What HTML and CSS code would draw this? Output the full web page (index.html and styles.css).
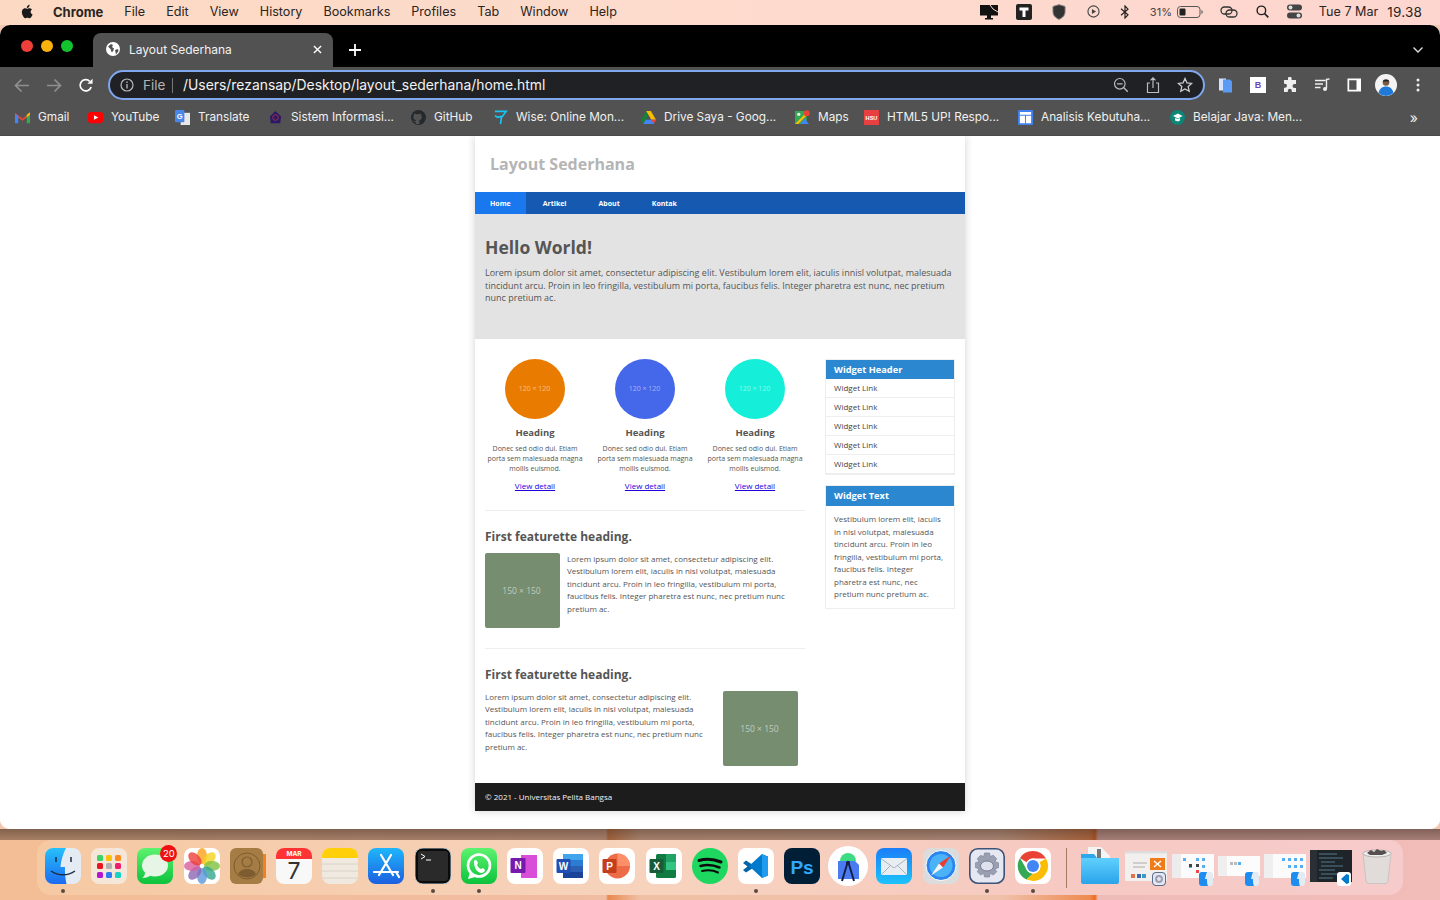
FILE: index.html
```html
<!DOCTYPE html>
<html lang="en">
<head>
<meta charset="utf-8">
<title>Layout Sederhana</title>
<link rel="stylesheet" href="styles.css">
</head>
<body>
<svg class="defs" aria-hidden="true">
  <defs>
    <linearGradient id="gBlue" x1="0" y1="0" x2="0" y2="1"><stop offset="0" stop-color="#1fb6fb"/><stop offset="1" stop-color="#1c5fe0"/></linearGradient>
    <linearGradient id="gMail" x1="0" y1="0" x2="0" y2="1"><stop offset="0" stop-color="#1a7df8"/><stop offset="1" stop-color="#1dc3fb"/></linearGradient>
    <linearGradient id="gGreen" x1="0" y1="0" x2="0" y2="1"><stop offset="0" stop-color="#5df36f"/><stop offset="1" stop-color="#0cc23c"/></linearGradient>
    <linearGradient id="gFolder" x1="0" y1="0" x2="0" y2="1"><stop offset="0" stop-color="#5fd0fd"/><stop offset="1" stop-color="#2aa3ea"/></linearGradient>
    <linearGradient id="gFinder" x1="0" y1="0" x2="0" y2="1"><stop offset="0" stop-color="#27c0fb"/><stop offset="1" stop-color="#1a6bf0"/></linearGradient>
  </defs>
</svg>

<header class="menubar">
  <div class="menu-left">
    <svg class="apple" viewBox="0 0 14 16"><path fill="#1a1a1a" d="M11.4 8.4c0-1.7 1.4-2.5 1.5-2.6-.8-1.200-2.100-1.300-2.500-1.400-1.100-.1-2.100.6-2.600.6-.6 0-1.400-.6-2.300-.6C4.300 4.400 3.200 5.100 2.600 6.200c-1.300 2.200-.3 5.400.9 7.200.6.900 1.300 1.800 2.200 1.800.9 0 1.200-.6 2.300-.6s1.400.6 2.300.6c1 0 1.600-.9 2.200-1.800.7-1 1-2 1-2.100-.1 0-2.100-.8-2.100-2.900zM9.600 3.100c.5-.6.800-1.400.7-2.300-.7 0-1.600.5-2.100 1.100-.5.500-.9 1.400-.8 2.200.8.100 1.700-.4 2.200-1z"/></svg>
    <b class="menu-app">Chrome</b>
    <span>File</span><span>Edit</span><span>View</span><span>History</span><span>Bookmarks</span><span>Profiles</span><span>Tab</span><span>Window</span><span>Help</span>
  </div>
  <div class="menu-right">
    <svg class="st st-monitor" viewBox="0 0 18 16"><path fill="#111" d="M0 1h18v10.500H0z"/><path fill="#111" d="M7 11h4v3h2v1.500H5V14h2z"/><path stroke="#fdd6cc" stroke-width="1" fill="none" d="M10 1l3 4 5 3"/></svg>
    <svg class="st st-t" viewBox="0 0 16 16"><rect width="16" height="16" rx="2" fill="#222"/><path fill="#fff" d="M3.500 3.500h9v3h-3v6.500h-3V6.500h-3z"/></svg>
    <svg class="st st-shield" viewBox="0 0 14 16"><path fill="#333" stroke="#777" d="M7 .7l6 1.800v5c0 4-2.800 6.500-6 7.800-3.200-1.300-6-3.800-6-7.800v-5z"/></svg>
    <svg class="st st-play" viewBox="0 0 14 14"><circle cx="7" cy="7" r="6" fill="none" stroke="#444" stroke-width="1.200"/><path fill="#444" d="M5.300 4.300l4.500 2.700-4.500 2.700z"/></svg>
    <svg class="st st-bt" viewBox="0 0 10 14"><path fill="none" stroke="#222" stroke-width="1.200" d="M1 3.800l7 6L5 13V1l3 3.200-7 6"/></svg>
    <span class="st-pct">31%</span>
    <svg class="st st-bat" viewBox="0 0 26 12"><rect x=".5" y=".5" width="22.500" height="11" rx="3" fill="none" stroke="#555"/><rect x="2.500" y="2.500" width="6" height="7" rx="1" fill="#222"/><path d="M24.500 4v4c.8-.3 1.200-1 1.200-2s-.4-1.700-1.200-2z" fill="#555"/></svg>
    <svg class="st st-link" viewBox="0 0 18 12"><g fill="none" stroke="#333" stroke-width="1.300"><rect x="1" y="1" width="11" height="7" rx="3.500"/><rect x="6" y="4" width="11" height="7" rx="3.500"/></g></svg>
    <svg class="st st-search" viewBox="0 0 14 14"><circle cx="5.800" cy="5.800" r="4.600" fill="none" stroke="#222" stroke-width="1.500"/><path d="M9.300 9.300l4 4" stroke="#222" stroke-width="1.700"/></svg>
    <svg class="st st-ctl" viewBox="0 0 15 15"><rect y=".5" width="15" height="6" rx="3" fill="#444"/><circle cx="3.500" cy="3.500" r="2" fill="#ddd"/><rect y="8.500" width="15" height="6" rx="3" fill="#444"/><circle cx="11.500" cy="11.500" r="2" fill="#ddd"/></svg>
    <span class="st-date">Tue 7 Mar</span><span class="st-time">19.38</span>
  </div>
</header>

<main class="window">
  <div class="tabstrip">
    <div class="lights"><i class="l-red"></i><i class="l-yellow"></i><i class="l-green"></i></div>
    <div class="tab">
      <svg class="tab-globe" viewBox="0 0 14 14"><circle cx="7" cy="7" r="7" fill="#fff"/><path fill="#525252" d="M2 4.500l3-2.500 2 1-1 2 2 1.500-1 3-1.500.5-1-3zM9 8l3-1 .5 2-2.500 3.500z"/></svg>
      <span class="tab-title">Layout Sederhana</span>
      <svg class="tab-x" viewBox="0 0 10 10"><path stroke="#fff" stroke-width="1.500" d="M1 1l8 8M9 1l-8 8"/></svg>
    </div>
    <svg class="newtab" viewBox="0 0 12 12"><path stroke="#fff" stroke-width="1.800" d="M6 0v12M0 6h12"/></svg>
    <svg class="tabmenu" viewBox="0 0 10 6"><path fill="none" stroke="#ddd" stroke-width="1.400" d="M.5.500L5 5 9.500.5"/></svg>
  </div>

  <div class="toolbar">
    <svg class="nav-ic" viewBox="0 0 16 14"><path fill="none" stroke="#8f8f8f" stroke-width="1.700" d="M15 7H2M7.500 1L1.500 7l6 6"/></svg>
    <svg class="nav-ic" viewBox="0 0 16 14"><path fill="none" stroke="#8f8f8f" stroke-width="1.700" d="M1 7h13M8.500 1l6 6-6 6"/></svg>
    <svg class="nav-ic" viewBox="0 0 16 16"><path fill="none" stroke="#fff" stroke-width="1.800" d="M13.500 9.500A6 6 0 1 1 12 3.500"/><path fill="#fff" d="M9.500 6.200h5.500V.7z"/></svg>
    <div class="omnibox">
      <svg class="omni-info" viewBox="0 0 14 14"><circle cx="7" cy="7" r="6" fill="none" stroke="#bbb" stroke-width="1.200"/><path stroke="#bbb" stroke-width="1.300" d="M7 6v4.500M7 3.500V5"/></svg>
      <span class="omni-file">File</span>
      <i class="omni-sep"></i>
      <span class="omni-url">/Users/rezansap/Desktop/layout_sederhana/home.html</span>
      <div class="omni-actions">
        <svg viewBox="0 0 16 16"><circle cx="6.800" cy="6.800" r="5.300" fill="none" stroke="#bbb" stroke-width="1.200"/><path stroke="#bbb" stroke-width="1.300" d="M4 6.800h5.600M10.800 10.800l4 4"/></svg>
        <svg viewBox="0 0 16 16"><path fill="none" stroke="#bbb" stroke-width="1.200" d="M5 6H2.500v9.500h11V6H11M8 11V1M5.500 3.300L8 .8l2.500 2.500"/></svg>
        <svg viewBox="0 0 16 16"><path fill="none" stroke="#ccc" stroke-width="1.300" d="M8 1.500l2 4.400 4.700.5-3.500 3.200 1 4.700L8 11.900l-4.200 2.400 1-4.700L1.300 6.400 6 5.900z"/></svg>
      </div>
    </div>
    <div class="tool-ext">
      <svg viewBox="0 0 16 16"><path fill="#d6e4fb" d="M1 1.500h7v12H1z"/><path fill="#5b9bf5" d="M5 2.500h7l2 2v11H5z"/></svg>
      <svg viewBox="0 0 16 16"><rect width="16" height="16" fill="#fff"/><text x="8" y="11.300" text-anchor="middle" class="ext-b">B</text></svg>
      <svg viewBox="0 0 16 16"><path fill="#eee" d="M6 1.500a1.800 1.800 0 0 1 3.600 0V3H14v4h-1.500a2 2 0 0 0 0 4H14v4H9.800v-1.200a2 2 0 0 0-4 0V15H2v-4.200h1a2 2 0 0 0 0-4H2V3h4z"/></svg>
      <svg viewBox="0 0 16 16"><path stroke="#eee" stroke-width="1.400" fill="none" d="M1 3.500h10.500M1 7h8M1 10.500h5.500M12.500 11.500V2.300L15.500 2"/><circle cx="11" cy="12" r="2" fill="#eee"/></svg>
      <svg viewBox="0 0 16 16"><path fill="#fff" d="M1.500 1.500h13.500v13H1.500z"/><path fill="#525252" d="M3.200 3.200h7.300v9.600H3.200z"/></svg>
      <svg class="ext-avatar" viewBox="0 0 22 22"><circle cx="11" cy="11" r="11" fill="#f4f4f4"/><path fill="#1f79d8" d="M3.500 19c1-4.500 4-6.500 7.500-6.500s6.500 2 7.500 6.500a11 11 0 0 1-15 0z"/><circle cx="11" cy="8.500" r="3.300" fill="#7a5a46"/><path fill="#222" d="M7.700 7.500c0-2.500 6.600-2.500 6.600 0z"/></svg>
      <svg class="ext-dots" viewBox="0 0 4 14"><circle cx="2" cy="2" r="1.500" fill="#eee"/><circle cx="2" cy="7" r="1.500" fill="#eee"/><circle cx="2" cy="12" r="1.500" fill="#eee"/></svg>
    </div>
  </div>

  <nav class="bookmarks">
    <a><svg viewBox="0 0 16 14"><path fill="#ea4335" d="M0 2l8 6 8-6v2.500L8 10.500 0 4.500z"/><path fill="#4285f4" d="M0 3v10h3.500V5z"/><path fill="#34a853" d="M16 3v10h-3.500V5z"/><path fill="#fbbc04" d="M12.500 4L16 1.500V4l-3.500 2.600z"/></svg><span>Gmail</span></a>
    <a><svg viewBox="0 0 16 12"><rect width="16" height="12" rx="3" fill="#f00"/><path fill="#fff" d="M6.300 3.500L11 6l-4.700 2.500z"/></svg><span>YouTube</span></a>
    <a><svg viewBox="0 0 16 16"><rect x="6" y="3" width="10" height="13" fill="#e8e8e8"/><rect width="10" height="13" rx="1" fill="#4a86e8"/><text x="5" y="9.500" text-anchor="middle" class="ext-g">G</text></svg><span>Translate</span></a>
    <a><svg viewBox="0 0 14 16"><path fill="#2b1a6a" d="M7 1l3 3 3 3-1 7H2L1 7l3-3z"/><circle cx="7" cy="8" r="3" fill="none" stroke="#a33" stroke-width="1"/></svg><span>Sistem Informasi...</span></a>
    <a><svg viewBox="0 0 16 16"><circle cx="8" cy="8" r="8" fill="#24292e"/><path fill="#525252" d="M5 15V12.500c-1.500.3-2.500-.3-3-1.500 1 .3 1.500 1 3 .8.100-.5.300-.8.500-1-2-.3-3-1.300-3-3.300 0-.8.200-1.300.7-1.900-.2-.5-.2-1.100.1-1.800.8 0 1.400.3 2 .8a6.500 6.500 0 0 1 3.400 0c.6-.5 1.200-.8 2-.8.300.7.300 1.300.1 1.800.5.600.7 1.100.7 1.900 0 2-1 3-3 3.300.4.400.5.800.5 1.400V15z"/></svg><span>GitHub</span></a>
    <a><svg viewBox="0 0 14 16"><path fill="none" stroke="#18c4f5" stroke-width="1.800" d="M1 1.500h12L8 8l-1 7M1 6l3 1.800 4-1"/></svg><span>Wise: Online Mon...</span></a>
    <a><svg viewBox="0 0 16 14"><path fill="#188038" d="M5.500 0L0 9.500l2.500 4.500L8 4.500z"/><path fill="#fbbc04" d="M5.500 0h5L16 9.500h-5z"/><path fill="#4285f4" d="M2.500 14L5 9.500h11L13.500 14z"/><path fill="#ea4335" d="M13.500 14L16 9.500h-5z"/></svg><span>Drive Saya - Goog...</span></a>
    <a><svg viewBox="0 0 14 14"><path fill="#34a853" d="M0 1h11v12H0z"/><path fill="#fbbc04" d="M0 13l11-11v3L3 13z"/><path fill="#4285f4" d="M5 13l4-5 4 5z"/><circle cx="11" cy="3" r="2.800" fill="#ea4335"/><circle cx="3.500" cy="4" r="1.500" fill="#eee"/></svg><span>Maps</span></a>
    <a><svg viewBox="0 0 16 16"><rect width="16" height="16" fill="#e84040"/><text x="8" y="10.500" text-anchor="middle" class="ext-h">HSU</text></svg><span>HTML5 UP! Respo...</span></a>
    <a><svg viewBox="0 0 16 16"><rect width="16" height="16" rx="1" fill="#3f7ff0"/><path fill="#fff" d="M2 2h12v3H2zM2 6h5.500v8H2zM8.500 6H14v8H8.500z"/></svg><span>Analisis Kebutuha...</span></a>
    <a><svg viewBox="0 0 15 15"><circle cx="7.500" cy="7.500" r="7.500" fill="#0d8577"/><path fill="#fff" d="M3 6l5-2.500L12.500 6 8 8.500z"/><path fill="#fff" d="M5 8v2.500l3 1 2-1V8L8 9z"/></svg><span>Belajar Java: Men...</span></a>
    <em class="bm-more">»</em>
  </nav>

  <div class="viewport">
    <div class="page">
      <div class="site-head">Layout Sederhana</div>
      <div class="site-nav">
        <a class="active">Home</a><a>Artikel</a><a>About</a><a>Kontak</a>
      </div>
      <section class="hero">
        <h1>Hello World!</h1>
        <p>Lorem ipsum dolor sit amet, consectetur adipiscing elit. Vestibulum lorem elit, iaculis innisl volutpat, malesuada tincidunt arcu. Proin in leo fringilla, vestibulum mi porta, faucibus felis. Integer pharetra est nunc, nec pretium nunc pretium ac.</p>
      </section>
      <div class="site-main">
        <div class="col-main">
          <div class="trio">
            <article class="trio-item">
              <div class="circle c-orange">120 × 120</div>
              <h3>Heading</h3>
              <p>Donec sed odio dui. Etiam porta sem malesuada magna mollis euismod.</p>
              <a class="view">View detail</a>
            </article>
            <article class="trio-item">
              <div class="circle c-blue">120 × 120</div>
              <h3>Heading</h3>
              <p>Donec sed odio dui. Etiam porta sem malesuada magna mollis euismod.</p>
              <a class="view">View detail</a>
            </article>
            <article class="trio-item">
              <div class="circle c-teal">120 × 120</div>
              <h3>Heading</h3>
              <p>Donec sed odio dui. Etiam porta sem malesuada magna mollis euismod.</p>
              <a class="view">View detail</a>
            </article>
          </div>
          <section class="feature">
            <h2>First featurette heading.</h2>
            <div class="feature-body">
              <div class="thumb">150 × 150</div>
              <p>Lorem ipsum dolor sit amet, consectetur adipiscing elit. Vestibulum lorem elit, iaculis in nisl volutpat, malesuada tincidunt arcu. Proin in leo fringilla, vestibulum mi porta, faucibus felis. Integer pharetra est nunc, nec pretium nunc pretium ac.</p>
            </div>
          </section>
          <section class="feature feature-alt">
            <h2>First featurette heading.</h2>
            <div class="feature-body">
              <p>Lorem ipsum dolor sit amet, consectetur adipiscing elit. Vestibulum lorem elit, iaculis in nisl volutpat, malesuada tincidunt arcu. Proin in leo fringilla, vestibulum mi porta, faucibus felis. Integer pharetra est nunc, nec pretium nunc pretium ac.</p>
              <div class="thumb">150 × 150</div>
            </div>
          </section>
        </div>
        <aside class="col-side">
          <div class="widget">
            <h4>Widget Header</h4>
            <ul>
              <li>Widget Link</li><li>Widget Link</li><li>Widget Link</li><li>Widget Link</li><li>Widget Link</li>
            </ul>
          </div>
          <div class="widget widget-text">
            <h4>Widget Text</h4>
            <p>Vestibulum lorem elit, iaculis in nisl volutpat, malesuada tincidunt arcu. Proin in leo fringilla, vestibulum mi porta, faucibus felis. Integer pharetra est nunc, nec pretium nunc pretium ac.</p>
          </div>
        </aside>
      </div>
      <footer class="site-foot">© 2021 - Universitas Pelita Bangsa</footer>
    </div>
  </div>
</main>

<div class="dock-area">
  <div class="dock">
    <div class="di run"><svg viewBox="0 0 36 36"><rect width="36" height="36" rx="8" fill="#e4ebf3"/><path fill="url(#gFinder)" d="M8 0h13c-3 6-5 12-5.500 19H20c-.3 5 .2 11 1.500 17H8a8 8 0 0 1-8-8V8a8 8 0 0 1 8-8z"/><path stroke="#1c2b44" stroke-width="1.500" d="M11 9v5M26 9v5"/><path fill="none" stroke="#1c2b44" stroke-width="1.300" d="M6 23c7 5 17 5 24 0"/></svg></div>
    <div class="di"><svg viewBox="0 0 36 36"><rect width="36" height="36" rx="8" fill="#f4e7da"/><g><rect x="6" y="7" width="6" height="6" rx="1.500" fill="#3cd264"/><rect x="15" y="7" width="6" height="6" rx="1.500" fill="#ffc107"/><rect x="24" y="7" width="6" height="6" rx="1.500" fill="#ff8a1f"/><rect x="6" y="15" width="6" height="6" rx="1.500" fill="#e8141e"/><rect x="15" y="15" width="6" height="6" rx="1.500" fill="#b0b0b0"/><rect x="24" y="15" width="6" height="6" rx="1.500" fill="#ee1f6a"/><rect x="6" y="24" width="6" height="6" rx="1.500" fill="#b515d0"/><rect x="15" y="24" width="6" height="6" rx="1.500" fill="#2f7bf5"/><rect x="24" y="24" width="6" height="6" rx="1.500" fill="#18d3c3"/></g></svg></div>
    <div class="di"><svg viewBox="0 0 36 36"><rect width="36" height="36" rx="8" fill="url(#gGreen)"/><ellipse cx="18" cy="17.500" rx="13" ry="11" fill="#e7f5e6"/><path fill="#e7f5e6" d="M8 24c0 3-1 5-3 6 4 0 7-1 9-3z"/></svg><b class="badge">20</b></div>
    <div class="di"><svg viewBox="0 0 36 36"><rect width="36" height="36" rx="8" fill="#fff"/><g transform="translate(18 18)" fill-opacity=".8"><ellipse cy="-10" rx="5" ry="8" fill="#f9a11b"/><ellipse cy="-10" rx="5" ry="8" fill="#f4d21f" transform="rotate(45)"/><ellipse cy="-10" rx="5" ry="8" fill="#7fc241" transform="rotate(90)"/><ellipse cy="-10" rx="5" ry="8" fill="#35a58e" transform="rotate(135)"/><ellipse cy="-10" rx="5" ry="8" fill="#5b97da" transform="rotate(180)"/><ellipse cy="-10" rx="5" ry="8" fill="#8c67b5" transform="rotate(225)"/><ellipse cy="-10" rx="5" ry="8" fill="#d95b9c" transform="rotate(270)"/><ellipse cy="-10" rx="5" ry="8" fill="#ec3f3a" transform="rotate(315)"/></g></svg></div>
    <div class="di"><svg viewBox="0 0 36 36"><path fill="#f2821f" d="M30 6h6v24h-6z"/><rect x="0" width="33" height="36" rx="6" fill="#a57c43"/><circle cx="17" cy="18" r="13" fill="none" stroke="#7e5c30" stroke-width="1"/><circle cx="17" cy="14" r="5" fill="none" stroke="#7e5c30" stroke-width="1.200"/><path fill="#7e5c30" d="M8 26c2-4 6-5 9-5s7 1 9 5c-2.500 2.500-5.500 3.500-9 3.500S10.500 28.500 8 26z"/></svg></div>
    <div class="di"><svg viewBox="0 0 36 36"><rect width="36" height="36" rx="8" fill="#f8f8f8"/><path fill="#f33" d="M8 0h20a8 8 0 0 1 8 8v3H0V8a8 8 0 0 1 8-8z"/><text x="18" y="8.300" text-anchor="middle" class="cal-m">MAR</text><text x="18" y="31" text-anchor="middle" class="cal-d">7</text></svg></div>
    <div class="di"><svg viewBox="0 0 36 36"><rect width="36" height="36" rx="8" fill="#efe9df"/><path fill="#ffcf0a" d="M8 0h20a8 8 0 0 1 8 8v2H0V8a8 8 0 0 1 8-8z"/><path stroke="#d8d2c8" d="M0 16h36M0 23h36M0 30h36"/></svg></div>
    <div class="di"><svg viewBox="0 0 36 36"><rect width="36" height="36" rx="8" fill="url(#gBlue)"/><path fill="none" stroke="#fff" stroke-width="2.200" stroke-linecap="round" d="M13 7l12 20M23 7L11 27M6 24h24M28 24l3 5"/></svg></div>
    <div class="di run"><svg viewBox="0 0 36 36"><rect width="36" height="36" rx="8" fill="#0b0b0b" stroke="#a7bcc6"/><rect x="3" y="3" width="30" height="30" rx="3" fill="#2a2a2a"/><path fill="none" stroke="#fff" d="M6 6l4 2.500L6 11M11 12h5"/></svg></div>
    <div class="di run"><svg viewBox="0 0 36 36"><rect width="36" height="36" rx="8" fill="url(#gGreen)"/><circle cx="18" cy="17.500" r="11" fill="none" stroke="#fff" stroke-width="2.600"/><path fill="#fff" d="M7 31l2-7 5 5zM13 14c0-2 2-3 3-1l1 2-1 2c1 2 2 3 4 4l2-1 2 2c0 2-2 3-4 3-4-1-7-5-7-11z"/></svg></div>
    <div class="di"><svg viewBox="0 0 36 36"><rect width="36" height="36" rx="8" fill="#fff"/><rect x="14" y="7" width="16" height="23" fill="#d84ed8"/><rect x="3.500" y="10" width="15" height="15" rx="1" fill="#7719aa"/><text x="11" y="21" text-anchor="middle" class="off-l">N</text></svg></div>
    <div class="di"><svg viewBox="0 0 36 36"><rect width="36" height="36" rx="8" fill="#fff"/><rect x="10" y="6" width="20" height="24" rx="1.500" fill="#2b7cd3"/><rect x="10" y="6" width="20" height="6" fill="#41a5ee"/><rect x="10" y="18" width="20" height="6" fill="#2b5fb4"/><rect x="10" y="24" width="20" height="6" fill="#1a4499"/><rect x="3.500" y="11" width="14" height="14" rx="1" fill="#1f4eb4"/><text x="10.500" y="22" text-anchor="middle" class="off-l">W</text></svg></div>
    <div class="di"><svg viewBox="0 0 36 36"><rect width="36" height="36" rx="8" fill="#fff"/><circle cx="18.500" cy="18" r="12.500" fill="#ed6c47"/><path fill="#ff8f6b" d="M18.500 5.500A12.500 12.500 0 0 1 31 18H18.500z"/><rect x="3.500" y="11" width="14" height="14" rx="1" fill="#c43e1c"/><text x="10.500" y="22" text-anchor="middle" class="off-l">P</text></svg></div>
    <div class="di"><svg viewBox="0 0 36 36"><rect width="36" height="36" rx="8" fill="#fff"/><rect x="10" y="6" width="20" height="24" rx="1.500" fill="#107c41"/><path fill="#21a366" d="M20 6h10v8H20z"/><path fill="#33c481" d="M20 14h10v8H20z"/><rect x="3.500" y="11" width="14" height="14" rx="1" fill="#185c37"/><text x="10.500" y="22" text-anchor="middle" class="off-l">X</text></svg></div>
    <div class="di"><svg viewBox="0 0 36 36"><circle cx="18" cy="18" r="18" fill="#1ed760"/><g fill="none" stroke="#0b0b0b" stroke-linecap="round"><path stroke-width="3" d="M7 12.500c7-2 15-1.500 22 1.500"/><path stroke-width="2.500" d="M8.500 18c6-1.500 13-1 19 1.500"/><path stroke-width="2" d="M10 23c5-1 11-1 16 1.500"/></g></svg></div>
    <div class="di run"><svg viewBox="0 0 36 36"><rect width="36" height="36" rx="8" fill="#fff"/><path fill="#0065a9" d="M5 15l3-2.500 7 4.500v3l-7 4.500L5 22l4.500-3.500z"/><path fill="#007acc" d="M24 6l-13 12 13 12 6-2.500v-19zM24 12l-6 6 6 6z"/><path fill="#1f9cf0" d="M24 6l6 3v18.500L24 30z"/></svg></div>
    <div class="di"><svg viewBox="0 0 36 36"><rect width="36" height="36" rx="8" fill="#001e36"/><text x="18" y="25.500" text-anchor="middle" class="ps">Ps</text></svg></div>
    <div class="di di-wide"><svg viewBox="0 0 40 40"><circle cx="20" cy="20" r="20" fill="#fff"/><path fill="#3ddc84" d="M12 15a8 8 0 0 1 16 0z"/><path fill="#4a7bf0" d="M10 15h17l4 4v14H10z"/><path fill="none" stroke="#15204a" stroke-width="2" d="M20 15l-6 20M20 15l6 20"/><circle cx="20" cy="17" r="2" fill="#15204a"/></svg></div>
    <div class="di"><svg viewBox="0 0 36 36"><rect width="36" height="36" rx="8" fill="url(#gMail)"/><rect x="5" y="10" width="26" height="17" rx="1.500" fill="#e8edf2"/><path fill="none" stroke="#aab4c0" d="M5.500 11L18 20l12.500-9M5.500 26.500l9-9M30.500 26.500l-9-9"/></svg></div>
    <div class="di"><svg viewBox="0 0 36 36"><rect width="36" height="36" rx="8" fill="#dcdcdc"/><circle cx="18" cy="17.500" r="15" fill="#2c85ee" stroke="#fff" stroke-width="1"/><circle cx="18" cy="17.500" r="11.500" fill="#4ab2f7"/><path fill="#ee3b30" d="M28 7.500L16 15.500l4 4z"/><path fill="#f4f4f4" d="M8 27.500l8-12 4 4z"/></svg></div>
    <div class="di run"><svg viewBox="0 0 36 36"><rect x=".8" y=".8" width="34.400" height="34.400" rx="8" fill="#e5e7f2" stroke="#3c5478" stroke-width="1.600"/><path fill="#9a9fb2" stroke="#777c90" stroke-width=".6" d="M15.500 5h5l.8 3.500 3-1.200 3.400 3.400-1.800 3 3.600 1v5l-3.600 1 1.800 3-3.400 3.400-3-1.800-.8 3.700h-5l-.8-3.700-3 1.800-3.400-3.400 1.800-3-3.600-1v-5l3.600-1-1.800-3 3.400-3.400 3 1.200z"/><ellipse cx="18" cy="18" rx="6.500" ry="5" fill="#dfe2ee" stroke="#777c90"/></svg></div>
    <div class="di run"><svg viewBox="0 0 36 36"><rect width="36" height="36" rx="8" fill="#fff"/><path fill="#ea4335" d="M18 3a15 15 0 0 1 13 7.500H18a7.500 7.500 0 0 0-6.500 3.800L5 10A15 15 0 0 1 18 3z"/><path fill="#34a853" d="M5 10l6.500 11.300A7.500 7.500 0 0 0 18 25.500L11.500 31.600A15 15 0 0 1 5 10z"/><path fill="#fbbc04" d="M31 10.500A15 15 0 0 1 18 33l-6.500-1.400 6.500-6.100a7.500 7.500 0 0 0 6.500-11.200z"/><circle cx="18" cy="18" r="7.500" fill="#fff"/><circle cx="18" cy="18" r="6" fill="#4285f4"/></svg></div>
    <i class="dock-sep"></i>
    <div class="di di-wide"><svg viewBox="0 0 40 40"><path fill="#f4f4f4" d="M8 1h13l9 9v12H8z"/><path fill="#777" d="M17 3h4v9h-4z"/><path fill="#2da7ee" d="M1 8h13l3 4h22v7H1z"/><path fill="url(#gFolder)" d="M1 12h38v24a2 2 0 0 1-2 2H3a2 2 0 0 1-2-2z"/></svg></div>
    <div class="di di-wide thumbwrap"><svg class="t-h30" viewBox="0 0 42 30"><rect width="42" height="30" fill="#f2f0ee"/><rect width="42" height="2.500" fill="#ddd"/><path stroke="#aaa" d="M8 12h14M8 16h12"/><rect x="25" y="7" width="15" height="12" fill="#f07b18"/><path stroke="#fff" stroke-width="1.500" d="M29 10l7 6M36 10l-7 6"/><rect x="6" y="23" width="4" height="4" fill="#e0734b"/><rect x="12" y="23" width="4" height="4" fill="#3d6aa8"/><rect x="17" y="23" width="4" height="4" fill="#3a9ac4"/></svg><svg class="thumb-badge" viewBox="0 0 16 16"><rect x=".5" y=".5" width="15" height="15" rx="4" fill="#e5e7f2" stroke="#3c5478"/><circle cx="8" cy="8" r="4.500" fill="#9a9fb2"/><circle cx="8" cy="8" r="2.200" fill="#e5e7f2"/></svg></div>
    <div class="di di-wide thumbwrap"><svg class="t-h24" viewBox="0 0 42 24"><rect width="42" height="24" fill="#fbfbfb"/><rect width="9" height="24" fill="#ececec"/><g fill="#57aef0"><rect x="11" y="4" width="3" height="3"/><rect x="24" y="4" width="3" height="3"/><rect x="30" y="4" width="3" height="3"/><rect x="17" y="11" width="3" height="3"/><rect x="30" y="11" width="3" height="3"/></g><g fill="#444"><rect x="17" y="10" width="3" height="3"/><rect x="24" y="10" width="3" height="3"/></g><rect x="24" y="16" width="3" height="3" fill="#e44"/></svg><svg class="thumb-badge" viewBox="0 0 14 14"><rect width="14" height="14" rx="3" fill="#e4ebf3"/><path fill="#1f8df0" d="M3 0h5c-1 2.500-1.500 5-2 7h2c0 2.500 0 5 1 7H3a3 3 0 0 1-3-3V3a3 3 0 0 1 3-3z"/></svg></div>
    <div class="di di-wide thumbwrap"><svg class="t-h20" viewBox="0 0 42 20"><rect width="42" height="20" fill="#fcfcfc"/><rect width="9" height="20" fill="#efefef"/><rect x="12" y="6" width="3" height="3" fill="#bbb"/><rect x="16" y="6" width="3" height="3" fill="#bbb"/><rect x="20" y="6" width="3" height="3" fill="#57aef0"/></svg><svg class="thumb-badge" viewBox="0 0 14 14"><rect width="14" height="14" rx="3" fill="#e4ebf3"/><path fill="#1f8df0" d="M3 0h5c-1 2.500-1.500 5-2 7h2c0 2.500 0 5 1 7H3a3 3 0 0 1-3-3V3a3 3 0 0 1 3-3z"/></svg></div>
    <div class="di di-wide thumbwrap"><svg class="t-h24" viewBox="0 0 42 24"><rect width="42" height="24" fill="#fbfbfb"/><rect width="9" height="24" fill="#efefef"/><g fill="#57aef0"><rect x="18" y="4" width="3" height="3"/><rect x="24" y="4" width="3" height="3"/><rect x="30" y="4" width="3" height="3"/><rect x="36" y="4" width="3" height="3"/><rect x="24" y="11" width="3" height="3"/><rect x="30" y="11" width="3" height="3"/><rect x="36" y="11" width="3" height="3"/></g></svg><svg class="thumb-badge" viewBox="0 0 14 14"><rect width="14" height="14" rx="3" fill="#e4ebf3"/><path fill="#1f8df0" d="M3 0h5c-1 2.500-1.500 5-2 7h2c0 2.500 0 5 1 7H3a3 3 0 0 1-3-3V3a3 3 0 0 1 3-3z"/></svg></div>
    <div class="di di-wide thumbwrap"><svg class="t-h32" viewBox="0 0 42 32"><rect width="42" height="32" fill="#1f2428"/><rect width="7" height="32" fill="#2a2f36"/><path stroke="#5f8fa8" stroke-width=".8" d="M9 4h18M9 8h24M11 12h14M11 16h22M9 20h16M11 24h20M9 28h14"/></svg><svg class="thumb-badge" viewBox="0 0 14 14"><rect width="14" height="14" rx="3" fill="#fff"/><path fill="#007acc" d="M9.500 2L4 7l5.500 5L12 11V3zM9.500 4.800L7 7l2.500 2.200z"/></svg></div>
    <div class="di"><svg viewBox="0 0 36 36"><path fill="#e1dcd9" stroke="#c9c4c2" d="M4 5h28l-3 28a3 3 0 0 1-3 2.500H10A3 3 0 0 1 7 33z"/><ellipse cx="18" cy="5.500" rx="14" ry="3.500" fill="#f0efee" stroke="#b5b0ae"/><path fill="#55504f" d="M8 5l4-3 3 2 3-3 4 2 3-1 3 3-5 2H11z"/></svg></div>
  </div>
</div>
</body>
</html>
```

FILE: styles.css
```css
* { box-sizing: border-box; }
html, body { margin: 0; padding: 0; }
body {
  width: 1440px; height: 900px; overflow: hidden;
  display: flex; flex-direction: column;
  font-family: "Inter", "Liberation Sans", sans-serif;
  background: #f3c8b0;
}
.defs { position: absolute; width: 0; height: 0; }

/* menu bar */
.menubar {
  height: 25px; flex: none;
  display: flex; justify-content: space-between; align-items: center;
  background: linear-gradient(90deg, #fbd9c2 0%, #fddbcd 45%, #fdd6cf 100%);
  color: #2a2522; font-size: 12.6px; padding: 0 0 2px 20px;
}
.menu-left { display: flex; align-items: center; gap: 21px; }
.apple { width: 13px; height: 15px; margin-right: -1px; }
.menu-app { font-weight: 700; font-size: 13px; }
.menu-right { display: flex; align-items: center; padding-right: 18px; }
.st { display: block; flex: none; }
.st-monitor { width: 18px; height: 16px; margin-right: 18px; }
.st-t { width: 16px; height: 16px; margin-right: 20px; }
.st-shield { width: 14px; height: 16px; margin-right: 21px; }
.st-play { width: 13px; height: 13px; margin-right: 20px; }
.st-bt { width: 10px; height: 14px; margin-right: 20px; }
.st-pct { font-size: 11px; color: #444; width: 27px; }
.st-bat { width: 26px; height: 12px; margin-right: 17px; }
.st-link { width: 18px; height: 12px; margin-right: 18px; }
.st-search { width: 13px; height: 13px; margin-right: 18px; }
.st-ctl { width: 15px; height: 15px; margin-right: 17px; }
.st-date { margin-right: 9px; font-size: 12.6px; }
.st-time { font-size: 13.5px; letter-spacing: .2px; }

/* window */
.window {
  height: 804px; flex: none;
  display: flex; flex-direction: column;
  border-radius: 10px; overflow: hidden;
  background: #fff;
  position: relative; z-index: 2;
}
.tabstrip {
  height: 42px; flex: none; background: #000;
  display: flex; align-items: flex-end;
}
.lights { display: flex; gap: 8px; align-self: flex-start; margin: 15px 0 0 21px; width: 72px; }
.lights i { width: 12px; height: 12px; border-radius: 50%; display: block; }
.l-red { background: #ee3f3a; }
.l-yellow { background: #f9b20c; }
.l-green { background: #12c22e; }
.tab {
  width: 240px; height: 34px; background: #525252;
  border-radius: 8px 8px 0 0;
  display: flex; align-items: center; padding: 0 11px 2px 13px;
  color: #f1f1f1; font-size: 12px;
}
.tab-globe { width: 14px; height: 14px; margin-right: 9px; flex: none; }
.tab-title { flex: 1; }
.tab-x { width: 9px; height: 9px; }
.newtab { width: 12px; height: 12px; margin: 0 0 11px 16px; }
.tabmenu { width: 10px; height: 6px; margin: 0 17px 14px auto; }

.toolbar {
  height: 36px; flex: none; background: #525252;
  display: flex; align-items: center; padding: 0 14px 0 14px;
}
.nav-ic { width: 16px; height: 15px; margin-right: 16px; flex: none; }
.omnibox {
  width: 1097px; height: 30px; margin-left: -2px; flex: none;
  background: #202124; border: 2px solid #7fa7ee; border-radius: 15px;
  display: flex; align-items: center; padding: 0 10px 0 10px;
}
.omni-info { width: 14px; height: 14px; flex: none; margin-right: 9px; }
.omni-file { color: #b4b4b4; font-size: 13.5px; width: 29px; padding-bottom: 1px; }
.omni-sep { width: 1px; height: 15px; background: #777; margin-right: 9px; }
.omni-url { color: #f2f2f2; font-size: 13.9px; flex: 1; white-space: nowrap; padding: 0 0 0 1px; }
.omni-actions { display: flex; gap: 16px; }
.omni-actions svg { width: 16px; height: 16px; display: block; }
.tool-ext { display: flex; align-items: center; margin-left: 13px; }
.tool-ext svg { width: 16px; height: 16px; margin-right: 16px; flex: none; }
.tool-ext .ext-avatar { width: 22px; height: 22px; margin: 0 19px 0 -3px; }
.tool-ext .ext-dots { width: 4px; height: 14px; margin: 0; }
.ext-b { font: 700 9px "Liberation Sans", sans-serif; fill: #6f42c1; }
.ext-g { font: 700 8px "Liberation Sans", sans-serif; fill: #fff; }
.ext-h { font: 700 6px "Liberation Sans", sans-serif; fill: #fff; }

.bookmarks {
  height: 33px; flex: none; background: #525252;
  border-bottom: 1px solid #4a4a4a;
  display: grid; align-items: center;
  grid-template-columns: 73px 87px 93px 143px 82px 148px 154px 69px 154px 152px 1fr 20px;
  padding: 0 22px 4px 15px;
  color: #f0f0f0; font-size: 11.8px;
}
.bookmarks a { display: flex; align-items: center; gap: 8px; white-space: nowrap; }
.bookmarks svg { width: 15px; height: 15px; flex: none; }
.bm-more { font-style: normal; font-size: 14px; text-align: right; }

/* page viewport */
.viewport { flex: 1; background: #fff; display: flex; justify-content: center; min-height: 0; overflow: hidden; }
.page {
  width: 490px; height: 675px; background: #fff;
  font-family: "Open Sans", "Liberation Sans", sans-serif;
  box-shadow: 0 0 8px rgba(0, 0, 0, .18);
  display: flex; flex-direction: column;
  color: #555;
}
.site-head {
  height: 56px; flex: none; padding: 0 15px;
  font-size: 16px; font-weight: 700; color: #b5b5b5;
  line-height: 56px;
}
.site-nav { height: 22px; flex: none; background: #1559b0; display: flex; }
.site-nav a {
  padding: 0 16px; line-height: 23px;
  color: #fff; font-size: 7px; font-weight: 700;
}
.site-nav a.active { background: #1a78ee; padding: 0 15px; margin-right: 1px; }
.hero { height: 125px; flex: none; background: #e3e3e3; padding: 21px 10px 0; }
.hero h1 { margin: 0; font-size: 17.5px; line-height: 24px; font-weight: 700; color: #555; }
.hero p { margin: 8px 0 0; font-size: 9px; line-height: 12.5px; color: #555; }

.site-main { flex: 1; display: flex; padding: 20px 10px 0; gap: 20px; min-height: 0; }
.col-main { width: 320px; flex: none; }
.col-side { width: 130px; flex: none; }

.trio { display: flex; margin: 0 -5px; padding-bottom: 18px; }
.trio-item { width: 110px; flex: none; padding: 0 5px; text-align: center; }
.circle {
  width: 60px; height: 60px; border-radius: 50%; margin: 0 auto;
  color: rgba(255, 255, 255, .5); font-size: 7px; line-height: 60px; padding-right: 1px;
}
.c-orange { background: #e97c00; }
.c-blue { background: #4567ea; }
.c-teal { background: #15efd9; }
.trio-item h3 { margin: 7px 0 0; font-size: 9.5px; line-height: 14px; font-weight: 700; color: #555; }
.trio-item p { margin: 4px 0 0; font-size: 7px; line-height: 10px; color: #555; }
.view { display: block; margin-top: 6px; font-size: 8px; line-height: 11px; color: #2200dd; text-decoration: underline; }

.feature { border-top: 1px solid #eee; padding-top: 18px; height: 138px; }
.trio-item:last-child .view { margin-bottom: 1px; }
.feature-alt { height: 135px; }
.feature h2 { margin: 0; font-size: 12px; line-height: 15px; font-weight: 700; color: #555; }
.feature-body { display: flex; margin-top: 9px; }
.feature-body p { margin: -0.5px 0 0; width: 228px; flex: none; font-size: 8px; line-height: 12.5px; color: #555; }
.thumb {
  width: 75px; height: 75px; flex: none; border-radius: 2px;
  background: #768d6f; color: rgba(255, 255, 255, .55);
  font-size: 8.5px; line-height: 75px; text-align: center;
  margin-right: 7px; padding-right: 2px;
}
.feature-alt p { margin-right: 10px; }

.widget { border: 1px solid #eee; margin-bottom: 10px; border-bottom-width: 2px; }
.widget h4 {
  margin: 0; height: 19px; background: #2b88d0; color: #fff;
  font-size: 9.25px; line-height: 19px; font-weight: 700; padding: 0 8px;
}
.widget ul { list-style: none; margin: 0; padding: 0; }
.widget li {
  height: 19px; line-height: 17px; padding: 0 8px;
  font-size: 8px; color: #444; border-bottom: 1px solid #eee;
}
.widget li:last-child { border-bottom: 0; height: 18px; }
.widget-text { border-bottom-width: 1px; margin-bottom: 0; }
.widget-text h4 { height: 20px; line-height: 20px; }
.widget-text p { margin: 0; padding: 7px 8px; font-size: 8px; line-height: 12.5px; color: #555; }

.site-foot {
  height: 28px; flex: none; background: #1c1c1c; color: #f2f2f2;
  font-size: 8px; line-height: 28px; padding: 0 10px;
}

/* dock */
.dock-area {
  flex: 1; padding-top: 11px;
  background:
    linear-gradient(180deg, rgba(60, 40, 30, .62) 0, rgba(60, 40, 30, .42) 11px, transparent 11px),
    linear-gradient(90deg, #f3bd95 0, #f0bca2 606px, #e88a50 608px, #f0c0a4 640px, #f0c2ac 1000px, #ee8a50 1090px, #ee6a20 1095px, #eebcb8 1098px, #f2bcb8 100%);
}
.dock {
  width: 1366px; height: 55px; margin-left: 37px;
  border-radius: 14px;
  background: linear-gradient(90deg, #f5c9a2 0%, #f7d3bd 45%, #f6c9c2 75%, #f6cbcb 100%);
  display: flex; align-items: flex-start;
  padding: 8px 0 0 3px;
}
.di { width: 46.2px; flex: none; height: 47px; position: relative; display: flex; justify-content: center; align-items: flex-start; }
.di svg { width: 36px; height: 36px; display: block; }
.di-wide svg { width: 40px; height: 40px; margin-top: -2px; }
.run::after {
  content: ""; position: absolute; left: 50%; top: 41px; margin-left: -2px;
  width: 4px; height: 4px; border-radius: 50%; background: #5a4a40;
}
.badge {
  position: absolute; left: 28px; top: -3px;
  width: 17px; height: 17px; border-radius: 50%;
  background: #ee1111; color: #fff;
  font: 400 9.5px/17px "Inter", sans-serif; text-align: center;
}
.dock-sep { width: 1px; height: 40px; margin: 0 10px; flex: none; background: #a87a68; }
.thumbwrap .t-h30 { width: 42px; height: 30px; margin-top: 3px; }
.thumbwrap .t-h24 { width: 42px; height: 24px; margin-top: 6px; }
.thumbwrap .t-h20 { width: 42px; height: 20px; margin-top: 8px; }
.thumbwrap .t-h32 { width: 42px; height: 32px; margin-top: 2px; }
.thumbwrap .thumb-badge {
  position: absolute; width: 14px; height: 14px; left: 29px; top: 24px; margin: 0;
}
.cal-m { font: 700 6.5px "Inter", sans-serif; fill: #fff; }
.cal-d { font: 400 23px "Inter", sans-serif; fill: #333; }
.off-l { font: 700 10px "Liberation Sans", sans-serif; fill: #fff; }
.ps { font: 700 19px "Liberation Sans", sans-serif; fill: #31a8ff; }
```
